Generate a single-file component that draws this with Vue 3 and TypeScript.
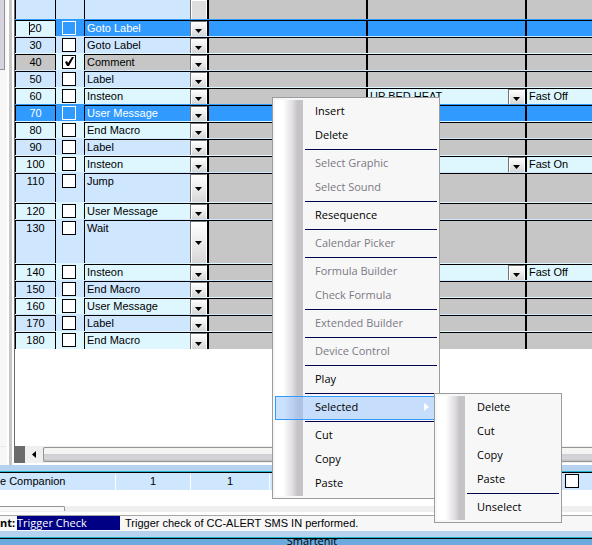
<script setup lang="ts">
import { ref } from 'vue'

interface Row {
  line: string
  kind: string
  size?: 'mid' | 'tall'
  selected?: boolean
  focused?: boolean
  comment?: boolean
  device?: string
  command?: string
}

interface MenuItem {
  label?: string
  disabled?: boolean
  children?: MenuItem[]
}

const kinds = ['Goto Label', 'Comment', 'Label', 'Insteon', 'User Message', 'End Macro', 'Jump', 'Wait']

const rows = ref<Row[]>([
  { line: '20', kind: 'Goto Label', selected: true, focused: true },
  { line: '30', kind: 'Goto Label' },
  { line: '40', kind: 'Comment', comment: true },
  { line: '50', kind: 'Label' },
  { line: '60', kind: 'Insteon', device: 'UP BED HEAT', command: 'Fast Off' },
  { line: '70', kind: 'User Message', selected: true },
  { line: '80', kind: 'End Macro' },
  { line: '90', kind: 'Label' },
  { line: '100', kind: 'Insteon', device: ' ', command: 'Fast On' },
  { line: '110', kind: 'Jump', size: 'mid' },
  { line: '120', kind: 'User Message' },
  { line: '130', kind: 'Wait', size: 'tall' },
  { line: '140', kind: 'Insteon', device: ' ', command: 'Fast Off' },
  { line: '150', kind: 'End Macro' },
  { line: '160', kind: 'User Message' },
  { line: '170', kind: 'Label' },
  { line: '180', kind: 'End Macro' },
])

const menu: MenuItem[] = [
  { label: 'Insert' },
  { label: 'Delete' },
  {},
  { label: 'Select Graphic', disabled: true },
  { label: 'Select Sound', disabled: true },
  {},
  { label: 'Resequence' },
  {},
  { label: 'Calendar Picker', disabled: true },
  {},
  { label: 'Formula Builder', disabled: true },
  { label: 'Check Formula', disabled: true },
  {},
  { label: 'Extended Builder', disabled: true },
  {},
  { label: 'Device Control', disabled: true },
  {},
  { label: 'Play' },
  {},
  {
    label: 'Selected',
    children: [{ label: 'Delete' }, { label: 'Cut' }, { label: 'Copy' }, { label: 'Paste' }, {}, { label: 'Unselect' }],
  },
  {},
  { label: 'Cut' },
  { label: 'Copy' },
  { label: 'Paste' },
]

const flag = ref(false)
</script>

<template>
  <div class="page">
    <main class="workspace">
      <aside class="side">
        <div class="side-thumb"></div>
        <div class="side-foot"></div>
      </aside>
      <div class="splitter"></div>
      <section class="editor">
        <table class="grid">
          <tbody>
            <tr class="row lead">
              <td class="num"></td>
              <td class="tick"></td>
              <td class="kind"><span class="drop"></span></td>
              <td class="cell empty"></td>
              <td class="cell empty"></td>
              <td class="last empty"></td>
            </tr>
            <tr
              v-for="(row, i) in rows"
              :key="i"
              class="row"
              :class="[row.size, { odd: i % 2 === 1, selected: row.selected, focused: row.focused, comment: row.comment }]"
            >
              <td class="num"><input v-model="row.line" type="text" aria-label="Line number" /></td>
              <td class="tick"><input v-model="row.comment" class="box" type="checkbox" :aria-label="`Comment out ${row.line}`" /></td>
              <td class="kind">
                <select v-model="row.kind" :aria-label="`Action ${row.line}`">
                  <option v-for="k in kinds" :key="k">{{ k }}</option>
                </select>
                <span class="drop"><svg width="7" height="4" viewBox="0 0 7 4"><path d="M0 0h7L3.500 4z" /></svg></span>
              </td>
              <td class="cell empty"></td>
              <td v-if="row.device" class="cell device">
                <select v-model="row.device" :aria-label="`Device ${row.line}`">
                  <option>{{ row.device }}</option>
                </select>
                <span class="drop"><svg width="7" height="4" viewBox="0 0 7 4"><path d="M0 0h7L3.500 4z" /></svg></span>
              </td>
              <td v-else class="cell empty"></td>
              <td class="last" :class="{ empty: !row.command }">{{ row.command }}</td>
            </tr>
          </tbody>
        </table>
        <div class="blank"></div>
        <div class="hscroll">
          <div class="corner"></div>
          <button class="step" type="button" aria-label="Scroll left">
            <svg width="4" height="7" viewBox="0 0 4 7"><path d="M4 0v7L0 3.500z" /></svg>
          </button>
          <div class="thumb"></div>
        </div>
      </section>
    </main>

    <div class="band"></div>

    <section class="summary">
      <span class="name">e Companion</span>
      <span class="count">1</span>
      <span class="count second">1</span>
      <span class="rest"></span>
      <input v-model="flag" class="box" type="checkbox" aria-label="Enabled" />
    </section>
    <div class="gap"></div>
    <div class="lower-scroll"><div class="lower-thumb"></div></div>

    <footer class="status">
      <strong>nt:</strong>
      <span class="event">Trigger Check</span>
      <span class="message">Trigger check of CC-ALERT SMS IN performed.</span>
    </footer>
    <div class="band"></div>
    <div class="desktop"><span>Smartenit</span></div>

    <ul class="menu" role="menu">
      <li v-for="(item, i) in menu" :key="i" :class="item.label ? 'entry' : 'rule'">
        <button v-if="item.label" type="button" :class="{ open: item.children }" :disabled="item.disabled">
          {{ item.label }}
          <svg v-if="item.children" width="5" height="8" viewBox="0 0 5 8"><path d="M0 0l5 4-5 4z" /></svg>
        </button>
        <ul v-if="item.children" class="menu sub" role="menu">
          <li v-for="(child, j) in item.children" :key="j" :class="child.label ? 'entry' : 'rule'">
            <button v-if="child.label" type="button">{{ child.label }}</button>
          </li>
        </ul>
      </li>
    </ul>
  </div>
</template>

<style>
body {
  overflow: hidden;
}
</style>

<style scoped>
.page,
.page * {
  box-sizing: border-box;
}
.page {
  position: relative;
  display: flex;
  flex-direction: column;
  height: 100vh;
  overflow: hidden;
  background: #fff;
  color: #000;
  font: 11px/14px 'Liberation Sans', Arial, sans-serif;
}
input,
select,
button {
  margin: 0;
  padding: 0;
  border: 0;
  border-radius: 0;
  appearance: none;
  background: transparent;
  color: inherit;
  font: inherit;
}
.workspace {
  flex: 1;
  display: flex;
  min-height: 0;
}
.side {
  display: flex;
  flex-direction: column;
  justify-content: space-between;
  width: 9px;
  background: #f7f7f7;
  border-right: 2px solid #fff;
}
.side-thumb {
  width: 5px;
  height: 70px;
  background: #d6d3de;
  border-right: 1px solid #949494;
  border-bottom: 1px solid #949494;
}
.side-foot {
  width: 6px;
  height: 19px;
  border-top: 1px solid #e7e7e7;
}
.splitter {
  width: 3px;
  background: #c6c6c6;
}
.editor {
  flex: 1;
  display: flex;
  flex-direction: column;
  min-width: 0;
  margin: 0 0 2px 2px;
  border-left: 1px solid #6b6b6b;
}
.grid {
  display: block;
}
.grid tbody {
  display: block;
}
.row {
  display: grid;
  grid-template-columns: 41px 28px 125px 159px 159px minmax(0, 1fr);
  height: 17px;
  padding-top: 1px;
  background: #def7ff;
}
.row:last-child {
  height: 18px;
}
.row.lead {
  height: 19px;
  padding: 0;
}
.row.odd,
.row.lead {
  background: #cee7ff;
}
.row.mid {
  height: 30px;
}
.row.tall {
  height: 44px;
}
.row.selected {
  background: #319aff;
  color: #fff;
}
td {
  padding: 0;
}
.num,
.kind,
.cell,
.last {
  border-top: 1px solid #000;
}
.lead td {
  border-top: 0;
}
.num {
  position: relative;
  border-left: 1px solid #000;
  border-right: 1px solid #000;
}
.num input {
  display: block;
  width: 100%;
  height: 14px;
  text-align: center;
}
.focused .num {
  background: #def7ff;
  color: #000;
}
.focused .num::before {
  content: '';
  position: absolute;
  top: 1px;
  left: 13px;
  width: 1px;
  height: 13px;
  background: #000;
}
.tick {
  padding: 1px 0 0 6px;
}
.box {
  display: block;
  width: 14px;
  height: 14px;
  border: 1px solid #000;
  background: #fff;
}
.box:checked {
  background: #fff
    url("data:image/svg+xml,%3Csvg xmlns='http://www.w3.org/2000/svg' viewBox='0 0 12 12'%3E%3Cpath d='M2 6l2-1 1 2 4-6h2L6 10H4z'/%3E%3C/svg%3E")
    center / 12px 12px no-repeat;
}
.selected .box {
  border-color: #fff;
  background: #319aff;
}
.kind,
.device {
  display: grid;
  grid-template-columns: minmax(0, 1fr) 17px;
  border-right: 2px solid #000;
}
.kind {
  border-left: 1px solid #000;
}
.kind select,
.device select {
  grid-area: 1 / 1 / 2 / 3;
  height: 14px;
  padding-left: 2px;
}
.drop {
  grid-area: 1 / 2;
  display: flex;
  align-items: center;
  justify-content: center;
  padding-top: 4px;
  border-top: 1px solid #737373;
  border-left: 1px solid #737373;
  border-right: 1px solid #fff;
  background: linear-gradient(#fff, #f0f0f0 40%, #d6d6d6);
  box-shadow: inset 1px 1px #fff;
  pointer-events: none;
}
.mid .drop,
.tall .drop {
  padding-top: 0;
}
.lead .drop {
  border-top: 0;
  background: #dedede;
}
.cell {
  border-right: 2px solid #000;
}
.comment .num,
.comment .kind,
.empty {
  background: #c6c6c6;
}
.selected .empty {
  background: #319aff;
}
.last {
  padding-left: 2px;
}
.blank {
  flex: 1;
}
.hscroll {
  display: flex;
  height: 17px;
  background: #efefef;
}
.corner {
  width: 10px;
  background: #6b6b6b;
}
.step {
  display: flex;
  align-items: center;
  justify-content: center;
  width: 18px;
}
.thumb {
  flex: 1;
  margin: 1px 0;
  border: 1px solid #949494;
  border-right: 0;
  border-radius: 2px 0 0 2px;
  background: linear-gradient(#f4f4f4 45%, #cfced3 50%, #d6d6da 80%, #bdbdc2);
}
.band {
  height: 8px;
  background: #b5d3ef;
  border-bottom: 1px solid #000;
  box-shadow: inset 0 -1px #21b6ce;
}
.summary {
  display: flex;
  height: 17px;
  padding-top: 1px;
  background: #cee7ff;
}
.name {
  width: 116px;
  border-right: 1px solid #fff;
  white-space: nowrap;
}
.count {
  width: 75px;
  border-right: 1px solid #fff;
  text-align: center;
}
.second {
  width: 79px;
}
.rest {
  flex: 1;
}
.summary .box {
  margin-right: 13px;
}
.gap {
  height: 16px;
}
.lower-scroll {
  height: 6px;
  background: #efefef;
}
.lower-thumb {
  width: 65px;
  height: 5px;
  border: solid #949494;
  border-width: 1px 1px 0 0;
  border-radius: 0 2px 0 0;
  background: #f7f7f7;
}
.status {
  display: flex;
  height: 16px;
  margin-top: 3px;
  border-top: 1px solid #a5a5a5;
  background: #f7f7f7;
}
.status strong {
  width: 17px;
}
.event {
  width: 103px;
  height: 14px;
  background: #000084;
  color: #fff;
}
.message {
  padding-left: 5px;
}
.event,
.status strong {
  font-family: 'Open Sans', sans-serif;
}
.desktop {
  display: flex;
  justify-content: center;
  height: 6px;
  overflow: hidden;
  background: #6baade;
  font: 11px/4px 'Open Sans', sans-serif;
}
.desktop span {
  margin-left: 32px;
}
.menu {
  position: absolute;
  top: 97px;
  left: 272px;
  width: 168px;
  margin: 0;
  padding: 2px;
  border: 1px solid #9c9c9c;
  background: linear-gradient(90deg, #fff 30%, #dedbe0 65%, #c6c3c6 80%) 2px 2px / 28px calc(100% - 4px) no-repeat #f7f7f7;
  color: #000;
  font: 11px/22px 'Open Sans', 'Noto Sans', sans-serif;
  list-style: none;
}
.entry {
  position: relative;
  height: 24px;
}
.entry > button {
  display: flex;
  align-items: center;
  justify-content: space-between;
  width: 100%;
  height: 24px;
  padding: 0 5px 2px 40px;
  text-align: left;
}
.entry > button:disabled {
  color: #7b7984;
}
.entry > .open {
  padding: 0 7px 2px 39px;
  border: 1px solid #319aff;
  background: rgba(150, 195, 255, 0.5);
}
.open svg {
  fill: #fff;
}
.rule {
  height: 4px;
  padding: 1px 0 2px 30px;
}
.rule::before {
  content: '';
  display: block;
  height: 1px;
  background: #00004a;
}
.sub {
  top: -3px;
  left: 159px;
  width: 128px;
}
</style>
